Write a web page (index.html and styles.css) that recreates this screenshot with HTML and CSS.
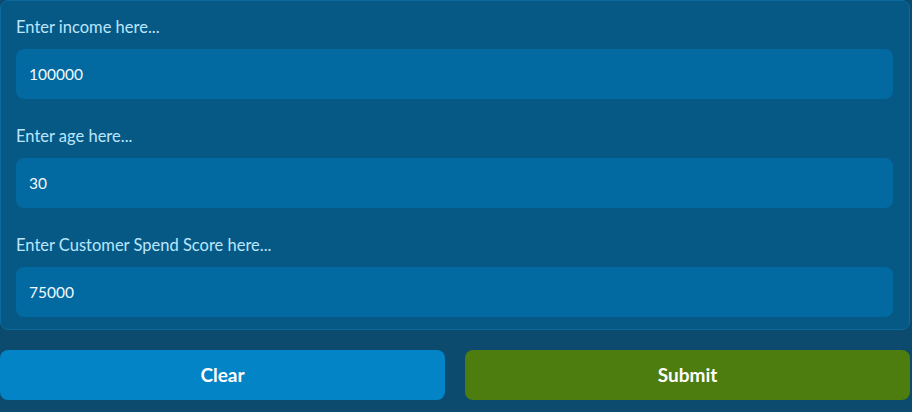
FILE: index.html
```html
<!DOCTYPE html>
<html lang="en">
<head>
<meta charset="utf-8">
<link rel="stylesheet" href="styles.css">
</head>
<body>
<div class="app">
  <div class="panel">
    <label class="field">
      <span class="label">Enter income here...</span>
      <input class="input" type="text" value="100000">
    </label>
    <label class="field">
      <span class="label">Enter age here...</span>
      <input class="input" type="text" value="30">
    </label>
    <label class="field">
      <span class="label">Enter Customer Spend Score here...</span>
      <input class="input" type="text" value="75000">
    </label>
  </div>
  <div class="actions">
    <button class="btn btn-clear">Clear</button>
    <button class="btn btn-submit">Submit</button>
  </div>
</div>
</body>
</html>
```
FILE: styles.css
```css
html, body {
  margin: 0;
  padding: 0;
  background: #0c4a6e;
  font-family: Lato, "Open Sans", sans-serif;
}
.app {
  width: 910px;
  display: flex;
  flex-direction: column;
  gap: 20px;
}
.panel {
  background: #075985;
  border: 1px solid #0c6a9c;
  border-radius: 8px;
  padding: 16px 16px 12px 15px;
  display: flex;
  flex-direction: column;
  gap: 27px;
}
.field {
  display: flex;
  flex-direction: column;
  gap: 12px;
}
.label {
  color: #bae6fd;
  font-size: 16.5px;
  line-height: 20px;
  height: 20px;
}
.input {
  box-sizing: border-box;
  height: 50px;
  width: 100%;
  border: none;
  outline: none;
  border-radius: 8px;
  background: #0369a1;
  color: #f0f9ff;
  font-family: inherit;
  font-size: 15.5px;
  padding: 0 13px;
}
.actions {
  display: flex;
  gap: 20px;
}
.btn {
  flex: 1;
  height: 50px;
  border: none;
  border-radius: 8px;
  color: #fff;
  font-family: inherit;
  font-weight: 700;
  font-size: 19px;
  padding-bottom: 2px;
}
.btn-clear { background: #0284c7; }
.btn-submit { background: #4d7c0f; }
```
